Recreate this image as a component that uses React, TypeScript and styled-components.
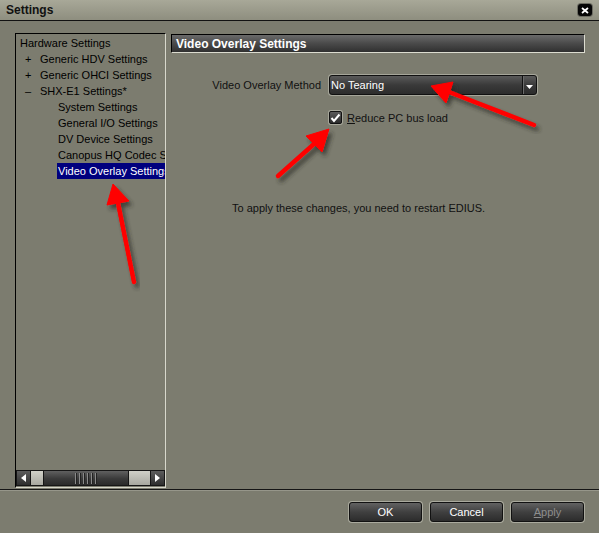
import React from "react";
import styled, { createGlobalStyle } from "styled-components";

const GlobalStyle = createGlobalStyle`
  html, body {
    margin: 0;
    padding: 0;
    background: #7c7c6f;
  }
  body {
    font-family: "Liberation Sans", Arial, sans-serif;
    font-size: 11px;
    color: #000;
  }
`;

const Window = styled.div`
  position: relative;
  width: 599px;
  height: 533px;
  display: flex;
  flex-direction: column;
  background: #7c7c6f;
  overflow: hidden;
`;

const TitleBar = styled.div`
  height: 20px;
  flex: none;
  display: flex;
  align-items: center;
  padding: 0 7px 0 6px;
  background: linear-gradient(#a8a898, #8e8e7f);
  border-bottom: 1px solid #121212;
`;

const Title = styled.div`
  font-size: 12px;
  font-weight: bold;
  color: #111;
`;

const CloseButton = styled.div`
  margin-left: auto;
  width: 14px;
  height: 12px;
  border-radius: 3px;
  background: #050505;
  box-shadow: 0 0 0 1px #6a6a60;
  display: flex;
  align-items: center;
  justify-content: center;
`;

const Body = styled.div`
  flex: 1;
  display: flex;
  gap: 5px;
  padding: 12px 14px 1px 15px;
  min-height: 0;
`;

const TreePanel = styled.div`
  width: 149px;
  flex: none;
  display: flex;
  flex-direction: column;
  border-top: 1px solid #000;
  border-left: 1px solid #000;
  border-right: 1px solid #d8d8cc;
  border-bottom: 1px solid #d8d8cc;
`;

const TreeList = styled.div`
  flex: 1;
  padding-top: 1px;
  overflow: hidden;
`;

const TreeRow = styled.div<{ $level: number }>`
  height: 16px;
  line-height: 16px;
  display: flex;
  white-space: nowrap;
  padding-left: ${(p) => (p.$level === 0 ? 3 : p.$level === 1 ? 8 : 41)}px;
`;

const Marker = styled.span`
  width: 14px;
  flex: none;
  padding-left: 1px;
`;

const RowLabel = styled.span<{ $selected?: boolean }>`
  padding-left: 1px;
  flex: 1;
  overflow: hidden;
  background: ${(p) => (p.$selected ? "#00007e" : "transparent")};
  color: ${(p) => (p.$selected ? "#fff" : "#000")};
`;

const ScrollBar = styled.div`
  height: 16px;
  flex: none;
  display: flex;
  margin-bottom: 1px;
`;

const ScrollButton = styled.div`
  width: 15px;
  flex: none;
  box-sizing: border-box;
  border: 1px solid #151515;
  background: linear-gradient(#5c5c5c, #2e2e2e);
  display: flex;
  align-items: center;
  justify-content: center;
`;

const Track = styled.div<{ $width: number }>`
  width: ${(p) => p.$width}px;
  flex: none;
  box-sizing: border-box;
  border-top: 1px solid #151515;
  border-bottom: 1px solid #151515;
  background: linear-gradient(#d0d0c8, #a8a8a0);
`;

const Thumb = styled.div`
  flex: 1;
  box-sizing: border-box;
  border: 1px solid #151515;
  background: linear-gradient(#606060, #3a3a3a 55%, #2a2a2a);
  display: flex;
  align-items: center;
  justify-content: center;
`;

const Grip = styled.div`
  width: 22px;
  height: 11px;
  background: repeating-linear-gradient(
    90deg,
    #8a8a8a 0 1px,
    #222 1px 2px,
    transparent 2px 4px
  );
`;

const RightPanel = styled.div`
  flex: 1;
  display: flex;
  flex-direction: column;
  padding-top: 1px;
`;

const Header = styled.div`
  height: 17px;
  display: flex;
  align-items: center;
  padding-left: 4px;
  border-top: 1px solid #000;
  border-left: 1px solid #000;
  border-right: 1px solid #dcdcd0;
  border-bottom: 1px solid #dcdcd0;
  background: linear-gradient(#6a6a6a, #4a4a4a 50%, #303030);
  color: #fff;
  font-size: 12px;
  font-weight: bold;
`;

const Form = styled.div`
  margin-top: 22px;
  display: grid;
  grid-template-columns: 150px 208px;
  grid-template-rows: 20px 17px;
  column-gap: 8px;
  row-gap: 14px;
  align-items: center;
`;

const FieldLabel = styled.div`
  text-align: right;
  color: #111;
`;

const Select = styled.div`
  height: 20px;
  box-sizing: border-box;
  display: flex;
  border: 1px solid #111;
  border-radius: 3px;
  box-shadow: 0 0 0 1px #a6a69a;
  background: linear-gradient(#5a5a5a, #3a3a3a 50%, #2c2c2c);
  color: #fff;
  overflow: hidden;
`;

const SelectValue = styled.div`
  flex: 1;
  padding-left: 1px;
  line-height: 18px;
`;

const SelectButton = styled.div`
  width: 14px;
  border-left: 1px solid #111;
  box-shadow: inset 1px 0 0 #6a6a6a;
  display: flex;
  align-items: flex-end;
  justify-content: center;
  padding-bottom: 4px;
  box-sizing: border-box;
`;

const CheckRow = styled.label`
  grid-column: 2;
  display: flex;
  align-items: center;
  gap: 5px;
  color: #111;
`;

const CheckBox = styled.div`
  width: 13px;
  height: 13px;
  box-sizing: border-box;
  border: 1px solid #111;
  border-radius: 2px;
  box-shadow: 0 0 0 1px #a6a69a;
  background: linear-gradient(#5a5a5a, #2c2c2c);
  display: flex;
  align-items: center;
  justify-content: center;
`;

const Note = styled.div`
  margin-top: 75px;
  padding-left: 61px;
  line-height: 14px;
  color: #111;
`;

const Footer = styled.div`
  height: 44px;
  flex: none;
  border-top: 1px solid #151515;
  box-shadow: inset 0 1px 0 #96968a;
  display: flex;
  justify-content: flex-end;
  align-items: flex-start;
  gap: 8px;
  padding: 12px 15px 0 0;
  box-sizing: border-box;
`;

const Button = styled.div<{ $disabled?: boolean }>`
  width: 73px;
  height: 20px;
  box-sizing: border-box;
  border: 1px solid #111;
  border-radius: 3px;
  box-shadow: 0 0 0 1px #aaaa9e;
  background: linear-gradient(#626262, #404040 50%, #2c2c2c);
  color: ${(p) => (p.$disabled ? "#8e8e8e" : "#fff")};
  display: flex;
  align-items: center;
  justify-content: center;
`;

const Overlay = styled.svg`
  position: absolute;
  left: 0;
  top: 0;
  pointer-events: none;
`;

const tree = [
  { level: 0, label: "Hardware Settings" },
  { level: 1, marker: "+", label: "Generic HDV Settings" },
  { level: 1, marker: "+", label: "Generic OHCI Settings" },
  { level: 1, marker: "\u2013", label: "SHX-E1 Settings*" },
  { level: 2, label: "System Settings" },
  { level: 2, label: "General I/O Settings" },
  { level: 2, label: "DV Device Settings" },
  { level: 2, label: "Canopus HQ Codec Settings" },
  { level: 2, label: "Video Overlay Settings", selected: true },
];

// tail -> tip, plus the two wing points of the head
const arrows = [
  { tail: [534, 125], base: [449, 92], wings: [[453, 82], [446, 103]], tip: [431, 86] },
  { tail: [278, 176], base: [314, 144], wings: [[306, 136], [322, 152]], tip: [329, 129] },
  { tail: [134, 282], base: [118, 203], wings: [[107, 205], [129, 201]], tip: [113, 184] },
];

const Arrows = () => (
  <Overlay width={599} height={533}>
    <defs>
      <filter id="shade" x="-20%" y="-20%" width="140%" height="140%">
        <feDropShadow dx="3" dy="4" stdDeviation="2" floodColor="#2a2a22" floodOpacity="0.7" />
      </filter>
    </defs>
    {arrows.map((a, i) => (
      <g key={i} filter="url(#shade)" fill="#ff0000" stroke="#ff0000">
        <line x1={a.tail[0]} y1={a.tail[1]} x2={a.base[0]} y2={a.base[1]} strokeWidth={4.5} strokeLinecap="round" />
        <polygon
          strokeWidth={1}
          strokeLinejoin="round"
          points={`${a.tip[0]},${a.tip[1]} ${a.wings[0][0]},${a.wings[0][1]} ${a.wings[1][0]},${a.wings[1][1]}`}
        />
      </g>
    ))}
  </Overlay>
);

export default function App() {
  return (
    <Window>
      <GlobalStyle />
      <TitleBar>
        <Title>Settings</Title>
        <CloseButton>
          <svg width="8" height="7" viewBox="0 0 8 7">
            <path d="M1 1L7 6M7 1L1 6" stroke="#fff" strokeWidth="1.8" />
          </svg>
        </CloseButton>
      </TitleBar>
      <Body>
        <TreePanel>
          <TreeList>
            {tree.map((row) => (
              <TreeRow key={row.label} $level={row.level}>
                {row.level === 1 && <Marker>{row.marker}</Marker>}
                <RowLabel $selected={row.selected}>{row.label}</RowLabel>
              </TreeRow>
            ))}
          </TreeList>
          <ScrollBar>
            <ScrollButton>
              <svg width="5" height="8" viewBox="0 0 5 8">
                <path d="M5 0L0 4L5 8Z" fill="#fff" />
              </svg>
            </ScrollButton>
            <Track $width={12} />
            <Thumb>
              <Grip />
            </Thumb>
            <Track $width={21} />
            <ScrollButton>
              <svg width="5" height="8" viewBox="0 0 5 8">
                <path d="M0 0L5 4L0 8Z" fill="#fff" />
              </svg>
            </ScrollButton>
          </ScrollBar>
        </TreePanel>
        <RightPanel>
          <Header>Video Overlay Settings</Header>
          <Form>
            <FieldLabel>Video Overlay Method</FieldLabel>
            <Select>
              <SelectValue>No Tearing</SelectValue>
              <SelectButton>
                <svg width="7" height="5" viewBox="0 0 7 5">
                  <path d="M0 0H7L3.5 4Z" fill="#fff" />
                </svg>
              </SelectButton>
            </Select>
            <CheckRow>
              <CheckBox>
                <svg width="11" height="10" viewBox="0 0 11 10">
                  <path d="M1.5 5L4 8L9.5 1.5" stroke="#fff" strokeWidth="2" fill="none" />
                </svg>
              </CheckBox>
              <span>
                <u>R</u>educe PC bus load
              </span>
            </CheckRow>
          </Form>
          <Note>To apply these changes, you need to restart EDIUS.</Note>
        </RightPanel>
      </Body>
      <Footer>
        <Button>OK</Button>
        <Button>Cancel</Button>
        <Button $disabled>
          <span>
            <u>A</u>pply
          </span>
        </Button>
      </Footer>
      <Arrows />
    </Window>
  );
}
